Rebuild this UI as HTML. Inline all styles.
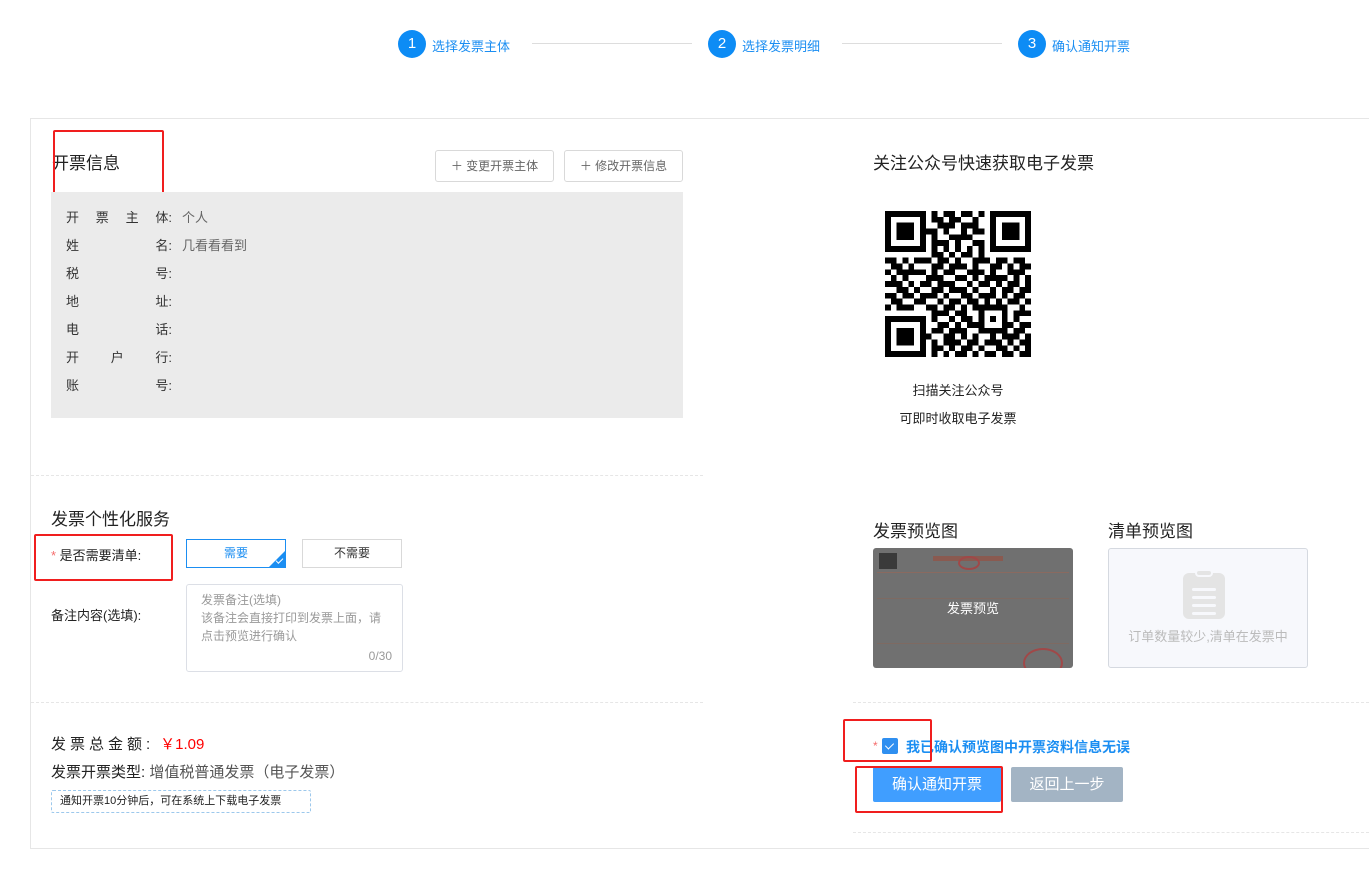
<!DOCTYPE html>
<html><head><meta charset="utf-8">
<style>
*{margin:0;padding:0;box-sizing:border-box}
body{width:1369px;height:882px;background:#fff;font-family:"Liberation Sans","Noto Sans CJK SC",sans-serif;color:#333;position:relative;overflow:hidden}
.a{position:absolute;white-space:nowrap}
.circ{position:absolute;width:28px;height:28px;border-radius:50%;background:#0d8cf5;color:#fff;font-size:15px;text-align:center;line-height:28px;top:30px}
.st{position:absolute;top:36px;font-size:13px;color:#1b8ef2}
.ln{position:absolute;top:43px;height:1px;background:#ddd}
.btn{position:absolute;border:1px solid #d9d9d9;border-radius:3px;font-size:12px;color:#666;text-align:center;line-height:30px;background:#fff}
.lab{position:absolute;left:66px;width:106px;font-size:13px;color:#333;display:flex;justify-content:space-between;height:18px}
.val{position:absolute;left:182px;font-size:13px;color:#666}
.red{position:absolute;border:2px solid #f01e1e;border-radius:2px}
.dash{position:absolute;height:0;border-top:1px dashed #e6e6e6}
</style></head><body>
<div class="circ" style="left:398px">1</div><div class="st" style="left:432px">选择发票主体</div>
<div class="ln" style="left:532px;width:160px"></div>
<div class="circ" style="left:708px">2</div><div class="st" style="left:742px">选择发票明细</div>
<div class="ln" style="left:842px;width:160px"></div>
<div class="circ" style="left:1018px">3</div><div class="st" style="left:1052px">确认通知开票</div>

<div class="a" style="left:30px;top:118px;width:1339px;height:731px;border:1px solid #e6e6e6;border-right:none"></div>
<div class="dash" style="left:31px;top:475px;width:672px"></div>
<div class="dash" style="left:31px;top:702px;width:672px"></div>
<div class="dash" style="left:853px;top:702px;width:516px"></div>
<div class="dash" style="left:853px;top:832px;width:516px"></div>

<div class="a" style="left:52px;top:149px;font-size:17px;color:#222">开票信息</div>
<div class="red" style="left:53px;top:130px;width:111px;height:67px"></div>
<div class="btn" style="left:435px;top:150px;width:119px;height:32px">＋ 变更开票主体</div>
<div class="btn" style="left:564px;top:150px;width:119px;height:32px">＋ 修改开票信息</div>
<div class="a" style="left:51px;top:192px;width:632px;height:226px;background:#ebebeb"></div>
<div class="lab" style="top:207px"><span>开</span><span>票</span><span>主</span><span>体:</span></div><div class="val" style="top:207px">个人</div>
<div class="lab" style="top:235px"><span>姓</span><span>名:</span></div><div class="val" style="top:235px">几看看看到</div>
<div class="lab" style="top:263px"><span>税</span><span>号:</span></div>
<div class="lab" style="top:291px"><span>地</span><span>址:</span></div>
<div class="lab" style="top:319px"><span>电</span><span>话:</span></div>
<div class="lab" style="top:347px"><span>开</span><span>户</span><span>行:</span></div>
<div class="lab" style="top:375px"><span>账</span><span>号:</span></div>

<div class="a" style="left:873px;top:149px;font-size:17px;color:#222">关注公众号快速获取电子发票</div>
<svg class="a" id="qr" style="left:885px;top:211px" width="146" height="146" viewBox="0 0 25 25" shape-rendering="crispEdges"></svg>
<div class="a" style="left:858px;width:200px;text-align:center;top:380px;font-size:13px;color:#222">扫描关注公众号</div>
<div class="a" style="left:858px;width:200px;text-align:center;top:408px;font-size:13px;color:#222">可即时收取电子发票</div>

<div class="a" style="left:51px;top:505px;font-size:17px;color:#222">发票个性化服务</div>
<div class="red" style="left:34px;top:534px;width:139px;height:47px"></div>
<div class="a" style="left:51px;top:545px;font-size:13px;color:#222"><span style="color:#f56c6c">*</span> 是否需要清单:</div>
<div class="a" style="left:186px;top:539px;width:100px;height:29px;border:1px solid #1b8ef2;color:#1b8ef2;font-size:12px;text-align:center;line-height:27px;overflow:hidden">需要<div style="position:absolute;right:0;bottom:0;width:0;height:0;border-left:16px solid transparent;border-bottom:16px solid #1b8ef2"></div><div style="position:absolute;right:2px;bottom:5px;width:7px;height:4px;border-left:1.5px solid #fff;border-bottom:1.5px solid #fff;transform:rotate(-45deg)"></div></div>
<div class="a" style="left:302px;top:539px;width:100px;height:29px;border:1px solid #d9d9d9;font-size:12px;text-align:center;line-height:27px;color:#333">不需要</div>
<div class="a" style="left:51px;top:605px;font-size:13px;color:#222">备注内容(选填):</div>
<div class="a" style="left:186px;top:584px;width:217px;height:88px;border:1px solid #dcdfe6;border-radius:3px;padding:6px 18px 0 14px;font-size:12px;color:#999;line-height:18px;white-space:normal">发票备注(选填)<br>该备注会直接打印到发票上面，请点击预览进行确认<div style="position:absolute;right:10px;bottom:6px;color:#999">0/30</div></div>

<div class="a" style="left:51px;top:733px;font-size:15px;color:#222;letter-spacing:4px">发票总金额:<span style="color:#f00;letter-spacing:0;margin-left:6px">￥1.09</span></div>
<div class="a" style="left:51px;top:761px;font-size:15px;color:#222">发票开票类型: <span style="color:#555">增值税普通发票（电子发票）</span></div>
<div class="a" style="left:51px;top:790px;width:260px;height:23px;border:1px dashed #9cc8ec;border-radius:2px;font-size:11px;line-height:21px;padding-left:8px;color:#222">通知开票10分钟后，可在系统上下载电子发票</div>

<div class="a" style="left:873px;top:517px;font-size:17px;color:#222">发票预览图</div>
<div class="a" style="left:1108px;top:517px;font-size:17px;color:#222">清单预览图</div>
<div class="a" style="left:873px;top:548px;width:200px;height:120px;border-radius:3px;background:#707070;overflow:hidden">
 <div class="a" style="left:6px;top:5px;width:18px;height:16px;background:#3a3a3a"></div>
 <div class="a" style="left:60px;top:8px;width:70px;height:5px;background:#8a5a50"></div>
 <div class="a" style="left:85px;top:8px;width:22px;height:14px;border:2px solid #a04848;border-radius:50%"></div>
 <div class="a" style="left:4px;top:24px;width:192px;height:1px;background:#8a6a60"></div>
 <div class="a" style="left:4px;top:50px;width:192px;height:1px;background:#7e6a62"></div>
 <div class="a" style="left:4px;top:95px;width:192px;height:1px;background:#7e6a62"></div>
 <div class="a" style="left:150px;top:100px;width:40px;height:30px;border:2px solid #a04848;border-radius:50%"></div>
 <div class="a" style="left:0;top:50px;width:200px;text-align:center;color:#fff;font-size:13px">发票预览</div>
</div>
<div class="a" style="left:1108px;top:548px;width:200px;height:120px;border:1px solid #d5d9e0;border-radius:3px;background:#f7f8fc">
 <div class="a" style="left:74px;top:24px;width:42px;height:46px;background:#e4e4e4;border-radius:6px"></div>
 <div class="a" style="left:86px;top:20px;width:18px;height:8px;background:#e4e4e4;border:2px solid #f7f8fc;border-radius:4px"></div>
 <div class="a" style="left:83px;top:39px;width:24px;height:3px;background:#f7f8fc;border-radius:2px;box-shadow:0 8px 0 #f7f8fc,0 16px 0 #f7f8fc,0 24px 0 #f7f8fc"></div>
 <div class="a" style="left:0;top:77px;width:198px;text-align:center;font-size:13px;color:#bbb">订单数量较少,清单在发票中</div>
</div>

<div class="a" style="left:873px;top:739px;font-size:12px;color:#f56c6c">*</div>
<div class="a" style="left:882px;top:738px;width:16px;height:16px;background:#2f8ff0;border-radius:2px"><div style="position:absolute;left:5px;top:3px;width:5px;height:8px;border-right:1.5px solid #fff;border-bottom:1.5px solid #fff;transform:rotate(45deg)"></div></div>
<div class="a" style="left:906px;top:737px;font-size:14px;font-weight:bold;color:#1b8ef2">我已确认预览图中开票资料信息无误</div>
<div class="red" style="left:843px;top:719px;width:89px;height:43px"></div>
<div class="a" style="left:873px;top:767px;width:128px;height:35px;background:#409eff;color:#fff;font-size:15px;text-align:center;line-height:35px;border-radius:2px">确认通知开票</div>
<div class="a" style="left:1011px;top:767px;width:112px;height:35px;background:#a3b4c4;color:#fff;font-size:15px;text-align:center;line-height:35px;border-radius:2px">返回上一步</div>
<div class="red" style="left:855px;top:766px;width:148px;height:47px"></div>

<script>
var rows=["1111111010110110101111111","1000001011011001001000001","1011101001110111001011101","1011101110100101101011101","1011101010011110001011101","1000001011101001101000001","1111111010101010101111111","0000000011010110100000000","1101011101101001110110110","0110100011011101001101011","1011111010110011101001110","0101000111001101011110101","1110101101110010110101101","0011010011011101001011011","1101101110100110111010110","0110011001011011010101101","1011100110110101111110010","0000000011101100100010111","1111111010010110101010100","1000001001101011100011011","1011101011011100111110110","1011101100110101001011101","1011101010111011011101011","1000001011010110100110101","1111111010101101011011011"];
var d="";rows.forEach(function(r,y){for(var x=0;x<25;x++)if(r[x]=="1")d+="M"+x+" "+y+"h1v1h-1z";});
document.getElementById("qr").innerHTML='<path fill="#000" d="'+d+'"/>';
</script>
</body></html>
